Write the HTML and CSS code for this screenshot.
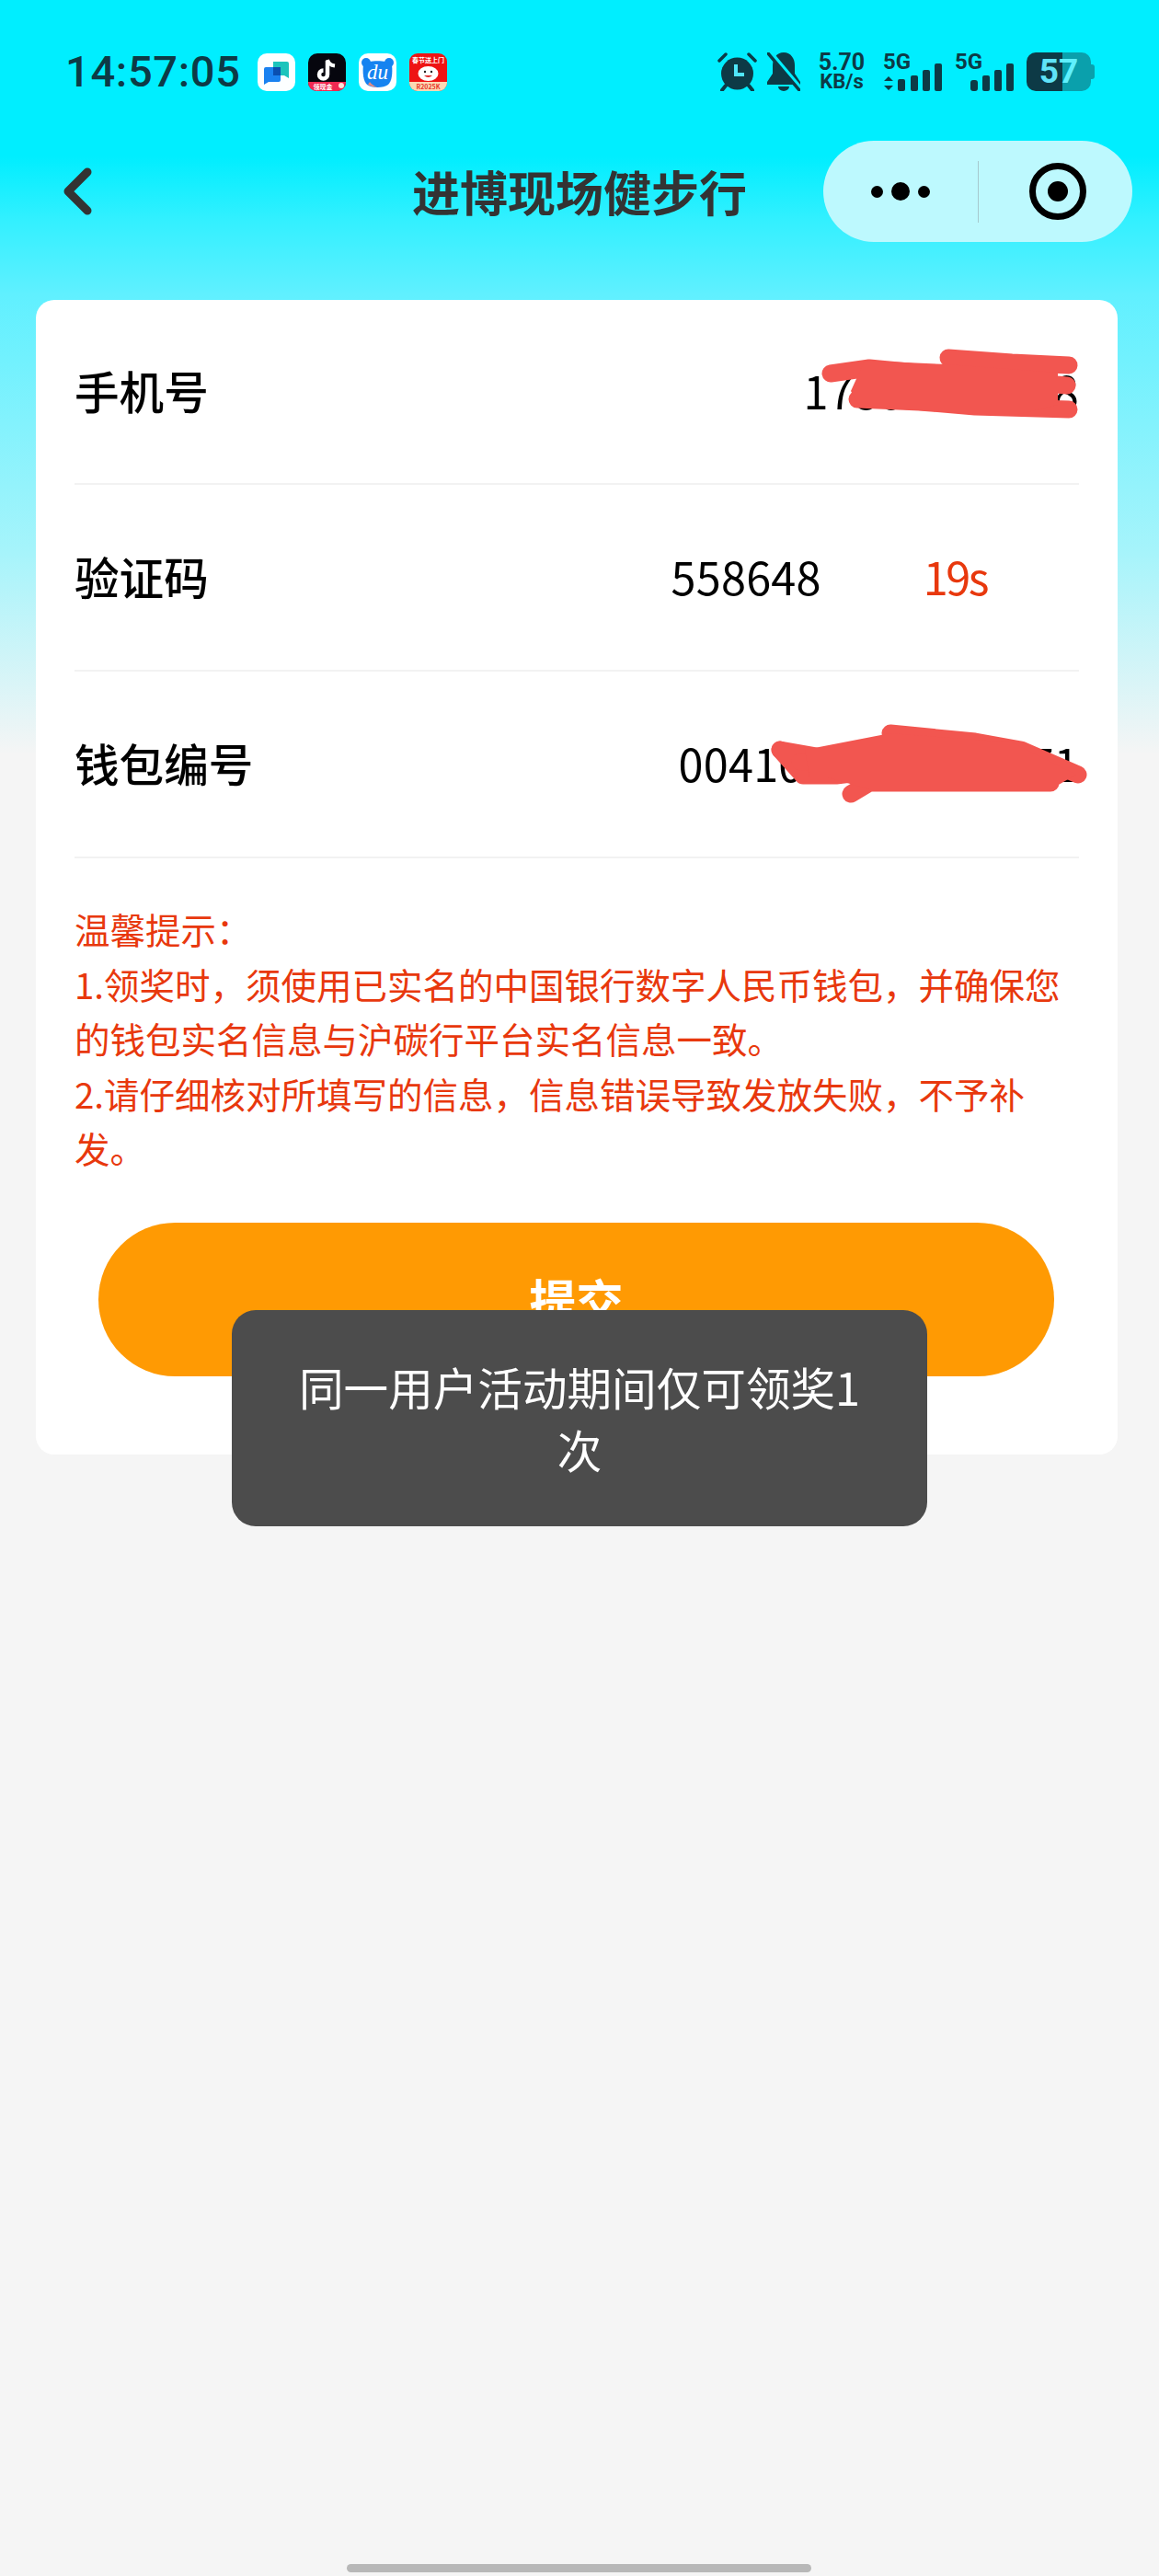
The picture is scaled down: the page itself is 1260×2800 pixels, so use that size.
FILE: index.html
```html
<!doctype html>
<html lang="zh-CN">
	<head>
		<meta charset="utf-8">
		<title>进博现场健步行</title>
		<meta name="viewport" content="width=device-width, initial-scale=1">
		<link rel="stylesheet" href="styles.css">
	</head>
	<body>
		<div class="page">
			<div class="status">
				<span class="time">14:57:05</span>
				<div class="apps">
					<svg class="app" viewBox="0 0 41 41">
						<rect width="41" height="41" rx="10" fill="#fdffff"/>
						<path d="M17 9h15a2 2 0 0 1 2 2v16l-5-3H17z" fill="#1cc4bc"/>
						<path d="M7 17a2 2 0 0 1 2-2h14a2 2 0 0 1 2 2v12a2 2 0 0 1-2 2H12l-5 3z" fill="#1a82f0"/>
						<rect x="17" y="15" width="8" height="9" fill="#0a4fb0"/>
					</svg>
					<svg class="app" viewBox="0 0 41 41">
						<rect width="41" height="41" rx="10" fill="#06060e"/>
						<path d="M21 8v15a4.500 4.500 0 1 1-4.500-4.500" fill="none" stroke="#fff" stroke-width="4.500"/>
						<path d="M21 7c1 4 4 6 8 6.500" fill="none" stroke="#fff" stroke-width="4"/>
						<path d="M0 31h41v1a9 9 0 0 1-9 9H9a9 9 0 0 1-9-9z" fill="#ee2a52"/>
						<circle cx="36" cy="35" r="3" fill="#ffe3d8"/>
						<text class="app-small" x="16" y="39" fill="#fff" text-anchor="middle">领现金</text>
					</svg>
					<svg class="app" viewBox="0 0 41 41">
						<rect width="41" height="41" rx="10" fill="#fdffff"/>
						<circle cx="8" cy="10" r="5" fill="#1683f0"/>
						<circle cx="33" cy="10" r="5" fill="#1683f0"/>
						<path d="M5 12c5-5 26-5 31 0 1 10 0 18-4 22-5 4-18 4-23 0-4-4-5-12-4-22z" fill="#1683f0"/>
						<path d="M10 34q5 3 10 3-6-3-8-6z" fill="#e88a80"/>
						<text class="app-du" x="20.500" y="28" fill="#fff" text-anchor="middle">du</text>
					</svg>
					<svg class="app" viewBox="0 0 41 41">
						<rect width="41" height="41" rx="9" fill="#ee1414"/>
						<path d="M0 31h41v1a9 9 0 0 1-9 9H9a9 9 0 0 1-9-9z" fill="#fbd9b4"/>
						<text class="app-small" x="20.500" y="10" fill="#fff" text-anchor="middle">春节送上门</text>
						<ellipse cx="20.500" cy="22" rx="11" ry="8" fill="#fff"/>
						<circle cx="17" cy="20" r="1.200" fill="#222"/>
						<circle cx="24" cy="20" r="1.200" fill="#222"/>
						<path d="M16 24q4.500 4 9 0z" fill="#d22"/>
						<text class="app-small" x="20.500" y="38.500" fill="#e8352a" text-anchor="middle">R2025K</text>
					</svg>
				</div>
				<div class="indicators">
					<svg class="alarm" viewBox="0 0 43 42">
						<circle cx="21.500" cy="23" r="17.500" fill="#0d3a46"/>
						<path d="M20 13v11h9" fill="none" stroke="#4fe6fa" stroke-width="4"/>
						<path d="M2 9l7-7M41 9l-7-7" stroke="#0d3a46" stroke-width="3.500" stroke-linecap="round"/>
						<path d="M9 36l-4 5M34 36l4 5" stroke="#0d3a46" stroke-width="4" stroke-linecap="round"/>
					</svg>
					<svg class="bell" viewBox="0 0 36 42">
						<path d="M18 0c8 0 12 7 12 14v9l6 9v3H0v-3l6-9v-9C6 7 10 0 18 0z" fill="#0d3a46"/>
						<path d="M12 37h12a6 5 0 0 1-12 0z" fill="#0d3a46"/>
						<path d="M4 0l32 38" stroke="#00eeff" stroke-width="4"/>
						<path d="M1 1l34 40" stroke="#0d3a46" stroke-width="3.500" stroke-linecap="round"/>
					</svg>
					<div class="speed">
						<span class="speed-num">5.70</span>
						<span class="speed-unit">KB/s</span>
					</div>
					<div class="signal">
						<span class="net">5G</span>
						<svg class="bars" viewBox="0 0 65 42">
							<path d="M6 26l5 5H1zM6 41l5-5H1z" fill="#0d3a46"/>
							<rect x="16" y="29" width="8" height="13" rx="2" fill="#0d3a46"/>
							<rect x="30" y="25" width="8" height="17" rx="2" fill="#0d3a46"/>
							<rect x="43" y="19" width="8" height="23" rx="2" fill="#0d3a46"/>
							<rect x="56" y="12" width="8" height="30" rx="2" fill="#0d3a46"/>
						</svg>
					</div>
					<div class="signal signal-two">
						<span class="net">5G</span>
						<svg class="bars" viewBox="0 0 65 42">
							<rect x="17" y="30" width="8" height="12" rx="3" fill="#0d3a46"/>
							<rect x="30" y="25" width="8" height="17" rx="2" fill="#0d3a46"/>
							<rect x="43" y="19" width="8" height="23" rx="2" fill="#0d3a46"/>
							<rect x="56" y="12" width="8" height="30" rx="2" fill="#0d3a46"/>
						</svg>
					</div>
					<div class="battery">
						<div class="battery-body"><span class="num-a">5</span><span class="num-b">7</span></div>
						<div class="battery-nub"></div>
					</div>
				</div>
			</div>

			<div class="nav">
				<div class="nav-left">
					<svg class="back" viewBox="0 0 32 52">
						<path d="M26 5L5 26l21 21" fill="none" stroke="#333" stroke-width="9" stroke-linecap="round" stroke-linejoin="round"/>
					</svg>
				</div>
				<div class="title">进博现场健步行</div>
				<div class="nav-right">
					<div class="capsule">
						<div class="dots">
							<span class="dot"></span><span class="dot big"></span><span class="dot"></span>
						</div>
						<div class="capsule-line"></div>
						<div class="target"><span class="target-in"></span></div>
					</div>
				</div>
			</div>

			<div class="card">
				<div class="row first">
					<span class="label">手机号</span>
					<span class="value">17800000008</span>
				</div>
				<div class="row">
					<span class="label">验证码</span>
					<div class="code">
						<span class="value">558648</span>
						<span class="count">19s</span>
					</div>
				</div>
				<div class="row">
					<span class="label">钱包编号</span>
					<span class="value">0041000000000071</span>
				</div>
				<div class="tips">
					<div>温馨提示&#65306;</div>
					<div>1.领奖时&#65292;须使用已实名的中国银行数字人民币钱包&#65292;并确保您的钱包实名信息与沪碳行平台实名信息一致。</div>
					<div>2.请仔细核对所填写的信息&#65292;信息错误导致发放失败&#65292;不予补发。</div>
				</div>
				<div class="submit">提交</div>
			</div>

			<!-- red scribbles drawn over the private numbers -->
			<svg class="scribble" viewBox="0 0 1260 1000">
				<g fill="none" stroke="#f25650" stroke-width="19" stroke-linecap="round" stroke-linejoin="round">
					<path d="M1031 389L1100 394L1162 397"/>
					<path d="M903 406L945 400L1030 408L1160 419"/>
					<path d="M932 434L1000 437L1060 442L1162 445"/>
					<path d="M848 815L905 825L968 815"/>
					<path d="M848 815L873 843L909 843L950 838"/>
					<path d="M870 828L960 826"/>
					<path d="M968 797L1060 806L1110 815L1172 842"/>
					<path d="M925 863L945 851L1142 851"/>
				</g>
				<polygon points="940,392 1030,396 1150,405 1150,440 1100,452 1030,448 935,442 925,425" fill="#f25650"/>
				<polygon points="875,815 968,797 1100,807 1170,842 1142,858 945,858 900,845 880,845" fill="#f25650"/>
			</svg>

			<div class="toast">同一用户活动期间仅可领奖1次</div>
			<div class="home-bar"></div>
		</div>
	</body>
</html>
```

FILE: styles.css
```css
html, body {
	margin: 0;
	padding: 0;
}

body {
	background: #f5f5f5;
	font-family: "Noto Sans CJK SC", "Noto Sans", sans-serif;
}

.page {
	position: relative;
	width: 1260px;
	height: 2800px;
	overflow: hidden;
	background: linear-gradient(180deg, #00eeff 170px, #33f0ff 240px, #60f0ff 320px, #a6f4fb 600px, #f5f5f5 820px);
}

/* status bar */
.status {
	display: flex;
	align-items: flex-start;
	box-sizing: border-box;
	height: 153px;
	padding: 57px 0 0 71px;
}

.time {
	font-family: Roboto, sans-serif;
	font-weight: 500;
	font-size: 47px;
	line-height: 42px;
	letter-spacing: 0.7px;
	color: #0d3a46;
}

.apps {
	display: flex;
	gap: 14px;
	margin-left: 18px;
	margin-top: 1px;
}

.app {
	display: block;
	width: 41px;
	height: 41px;
}

.app-small {
	font-family: "Noto Sans CJK SC", sans-serif;
	font-size: 7px;
	font-weight: 700;
}

.app-du {
	font-family: "Liberation Serif", serif;
	font-style: italic;
	font-size: 23px;
}

.indicators {
	display: flex;
	align-items: flex-start;
	margin-left: auto;
	padding-right: 70px;
}

.alarm {
	width: 43px;
	height: 42px;
}

.bell {
	width: 36px;
	height: 42px;
	margin-left: 11px;
}

.speed {
	display: flex;
	flex-direction: column;
	align-items: center;
	width: 52px;
	margin-left: 19px;
	font-family: Roboto, sans-serif;
	font-weight: 700;
	color: #0d3a46;
}

.speed-num {
	font-size: 25px;
	line-height: 22px;
}

.speed-unit {
	font-size: 22px;
	line-height: 20px;
}

.signal {
	position: relative;
	width: 65px;
	height: 42px;
	margin-left: 19px;
}

.signal-two {
	margin-left: 13px;
}

.bars {
	display: block;
	width: 65px;
	height: 42px;
}

.net {
	position: absolute;
	left: 0;
	top: 0;
	font-family: Roboto, sans-serif;
	font-weight: 700;
	font-size: 24px;
	line-height: 20px;
	color: #0d3a46;
}

.battery {
	display: flex;
	align-items: center;
	margin-left: 13px;
}

.battery-body {
	width: 70px;
	height: 42px;
	border-radius: 10px;
	background: linear-gradient(90deg, #0d3a46 55%, #0aa0ac 55%);
	text-align: center;
	font-family: Roboto, sans-serif;
	font-weight: 700;
	font-size: 37px;
	line-height: 42px;
}

.num-a {
	color: #5fe3f8;
}

.num-b {
	color: #5ff0fc;
}

.battery-nub {
	width: 4px;
	height: 16px;
	border-radius: 0 3px 3px 0;
	background: #0aa0ac;
}

/* nav bar */
.nav {
	display: grid;
	grid-template-columns: 1fr auto 1fr;
	align-items: center;
	height: 110px;
}

.nav-left {
	padding-left: 69px;
}

.back {
	display: block;
	width: 32px;
	height: 52px;
}

.title {
	font-weight: 700;
	font-size: 52px;
	line-height: 60px;
	color: #333;
}

.nav-right {
	display: flex;
	justify-content: flex-end;
	padding-right: 29px;
}

.capsule {
	display: flex;
	align-items: center;
	width: 336px;
	height: 110px;
	border-radius: 55px;
	background: #bdf9fe;
}

.dots {
	display: flex;
	align-items: center;
	justify-content: center;
	gap: 9px;
	width: 168px;
}

.dot {
	width: 13px;
	height: 13px;
	border-radius: 50%;
	background: #000;
}

.dot.big {
	width: 20px;
	height: 20px;
}

.capsule-line {
	width: 1px;
	height: 67px;
	background: #a5c9cd;
}

.target {
	display: flex;
	align-items: center;
	justify-content: center;
	box-sizing: border-box;
	width: 62px;
	height: 62px;
	margin-left: 55px;
	border: 7px solid #000;
	border-radius: 50%;
}

.target-in {
	width: 22px;
	height: 22px;
	border-radius: 50%;
	background: #000;
}

/* form card */
.card {
	margin: 63px 45px 0 39px;
	padding: 0 42px 85px;
	background: #fff;
	border-radius: 20px;
}

.row {
	display: flex;
	align-items: center;
	justify-content: space-between;
	box-sizing: border-box;
	height: 203px;
	padding-bottom: 4px;
	border-bottom: 2px solid #f2f2f2;
	font-size: 48.6px;
	color: #000;
}

.row.first {
	height: 201px;
}

.label {
	font-weight: 500;
}

.value {
	letter-spacing: 0.25px;
}

.code {
	display: flex;
	gap: 111px;
	padding-right: 100px;
}

.count {
	letter-spacing: -2.5px;
	color: #e8380d;
}

.tips {
	padding-top: 47px;
	font-size: 38.5px;
	line-height: 59.5px;
	color: #e8380d;
}

.submit {
	margin: 51px 27px 0 26px;
	height: 167px;
	border-radius: 84px;
	background: #ff9a03;
	text-align: center;
	font-weight: 700;
	font-size: 51px;
	line-height: 167px;
	color: #fff;
}

/* overlays */
.scribble {
	position: absolute;
	left: 0;
	top: 0;
	width: 1260px;
	height: 1000px;
}

.toast {
	position: absolute;
	left: 252px;
	top: 1424px;
	box-sizing: border-box;
	width: 756px;
	padding: 49px 70px 50px;
	border-radius: 26px;
	background: #4c4c4c;
	text-align: center;
	font-size: 48.6px;
	line-height: 68px;
	color: #fff;
}

.home-bar {
	position: absolute;
	left: 377px;
	top: 2787px;
	width: 505px;
	height: 9px;
	border-radius: 5px;
	background: #b8b8b8;
}
```
